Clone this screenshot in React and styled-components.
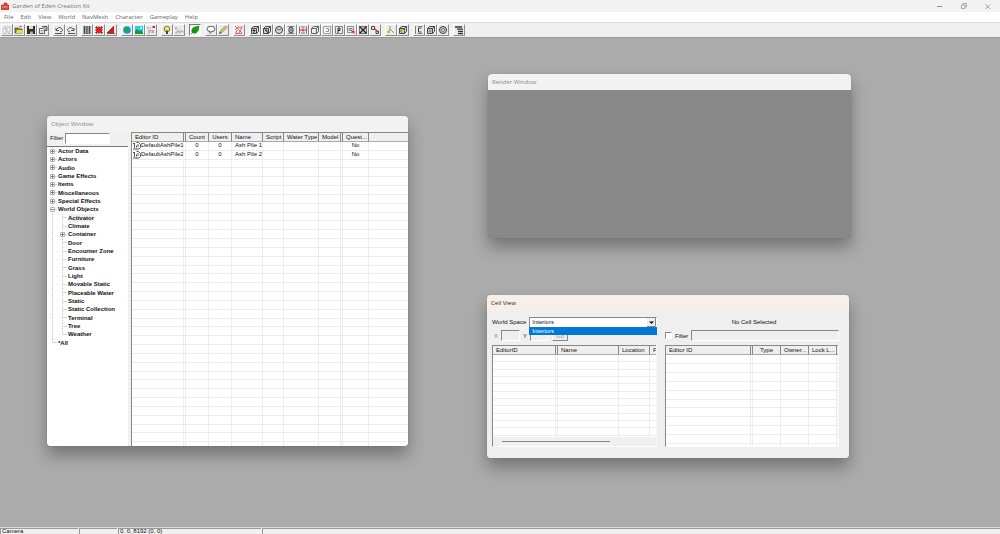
import React, { useState } from 'react';
import styled, { createGlobalStyle, css } from 'styled-components';

const GlobalStyle = createGlobalStyle`
  * {
    box-sizing: border-box;
  }
  body {
    margin: 0;
    overflow: hidden;
    background: #ababab;
  }
  button, input, select {
    font: inherit;
    color: inherit;
    margin: 0;
    padding: 0;
    border-radius: 0;
    outline: none;
  }
`;

const sunken = css`
  border: 1px solid;
  border-color: #888 #fff #fff #888;
`;

const Shell = styled.div`
  display: flex;
  flex-direction: column;
  height: 100vh;
  font-family: "Liberation Sans", Arial, sans-serif;
  font-size: 6px;
  line-height: 8px;
  color: #111;
`;

const TitleBar = styled.header`
  display: flex;
  align-items: center;
  flex: none;
  height: 12px;
  padding: 0 8px 0 1px;
  gap: 3px;
  background: #f2f2f2;
  color: #777;
  font-family: "Open Sans", "Noto Sans", sans-serif;
`;

const AppTitle = styled.h1`
  flex: 1;
  margin: 0;
  font-size: 6px;
  font-weight: 400;
`;

const CaptionButtons = styled.div`
  display: flex;
  gap: 16px;
`;

const CaptionButton = styled.button`
  display: flex;
  width: 8px;
  height: 8px;
  border: 0;
  background: none;
`;

const MenuBar = styled.nav`
  display: flex;
  align-items: center;
  flex: none;
  height: 10px;
  padding: 0 4px;
  gap: 7px;
  background: #fff;
  font-family: "Open Sans", "Noto Sans", sans-serif;
`;

const MenuLink = styled.a`
  color: #666;
  text-decoration: none;
`;

const Toolbar = styled.div`
  display: flex;
  flex: none;
  gap: 4px;
  height: 15px;
  padding: 1px 1px 0;
  border-top: 1px solid #dcdcdc;
  background: #f0f0f0;
`;

const ToolGroup = styled.div`
  display: flex;
`;

const ToolButton = styled.button`
  display: flex;
  width: 12px;
  height: 12px;
  border: 1px solid;
  border-color: ${({ $pressed }) => ($pressed ? '#777 #fff #fff #777' : '#fff #8c8c8c #8c8c8c #fff')};
  background: ${({ $pressed }) => ($pressed ? '#fafafa' : '#ececec')};
  svg {
    width: 10px;
    height: 10px;
  }
`;

const Workspace = styled.main`
  position: relative;
  flex: 1;
  overflow: hidden;
  border-top: 1px solid #999;
  background: #ababab;
`;

const StatusBar = styled.footer`
  display: flex;
  flex: none;
  gap: 1px;
  height: 7px;
  overflow: hidden;
  background: #f0f0f0;
  border-top: 1px solid #ddd;
  line-height: 5px;
`;

const StatusPane = styled.div`
  flex: ${({ $width }) => ($width ? `0 0 ${$width}px` : '1')};
  padding: 0 1px;
  border-top: 1px solid #999;
  border-left: 1px solid #999;
`;

const Window = styled.section`
  position: absolute;
  left: ${({ $x }) => $x}px;
  top: ${({ $y }) => $y}px;
  width: ${({ $w }) => $w}px;
  height: ${({ $h }) => $h}px;
  display: flex;
  flex-direction: column;
  overflow: hidden;
  border-radius: 4px;
  background: ${({ $fill }) => $fill || '#f0f0f0'};
  box-shadow: 0 0 1px 0 rgba(0, 0, 0, .3), 0 9px 16px rgba(0, 0, 0, .32);
`;

const WindowTitle = styled.h2`
  flex: none;
  height: 16px;
  margin: 0;
  padding: 0 4px;
  font-family: "Open Sans", "Noto Sans", sans-serif;
  font-size: 6px;
  font-weight: 400;
  line-height: 16px;
  color: ${({ $active }) => ($active ? '#222' : '#888')};
  background: ${({ $active }) => ($active ? '#f9efea' : '#f2f2f2')};
`;

const Split = styled.div`
  display: flex;
  flex: 1;
  min-height: 0;
`;

const SidePane = styled.div`
  display: flex;
  flex-direction: column;
  flex: 0 0 81px;
`;

const FilterRow = styled.div`
  display: flex;
  gap: 2px;
  height: 14px;
  padding: 1px 3px 2px;
  line-height: 10px;
`;

const TextBox = styled.input`
  ${sunken}
  width: ${({ $width }) => ($width ? `${$width}px` : 'auto')};
  flex: ${({ $width }) => ($width ? 'none' : '1')};
  min-width: 0;
  height: 11px;
  background: ${({ disabled }) => (disabled ? '#efefef' : '#fff')};
`;

const TreeBox = styled.div`
  flex: 1;
  overflow: hidden;
  border-top: 1px solid #777;
  background: #fff;
`;

const Tree = styled.ul`
  display: grid;
  grid-auto-rows: 1fr;
  height: 200px;
  margin: 0;
  padding: 0 1px;
  list-style: none;
  font-weight: 700;
`;

const TreeRow = styled.li`
  display: flex;
  align-items: center;
  white-space: nowrap;
`;

const Guide = styled.span`
  display: flex;
  align-items: center;
  align-self: stretch;
  width: 10px;
  padding-left: 2px;
  background:
    ${({ $branch }) => ($branch ? 'linear-gradient(#d4d4d4, #d4d4d4) 5px 50% / 4px 1px no-repeat,' : '')}
    repeating-linear-gradient(#ccc 0 1px, #f4f4f4 1px 2px) 4px 0 / 1px ${({ $last }) => ($last ? '50%' : '100%')} no-repeat;
`;

const TreeLabel = styled.span`
  background: ${({ $selected }) => ($selected ? '#f0f0f0' : 'none')};
`;

const ListBox = styled.div`
  flex: 1;
  min-width: 0;
  min-height: 0;
  overflow: hidden;
  border-left: 1px solid #888;
  background: #fff;
`;

const Splitter = styled.div`
  flex: 0 0 3px;
  background: #f0f0f0;
`;

const Table = styled.table`
  table-layout: fixed;
  width: 100%;
  height: ${({ $height }) => $height}px;
  border-spacing: 0;
  th, td {
    padding: 0 3px;
    overflow: hidden;
    white-space: nowrap;
    font-weight: 400;
    line-height: 7px;
    text-align: left;
  }
  th {
    height: 10px;
    background: #efefef;
    border-top: 1px solid #888;
    border-right: 1px solid #888;
    border-bottom: 1px solid #aaa;
  }
  td {
    height: ${({ $row }) => $row}px;
    border-right: 1px solid #ececec;
    border-bottom: 1px solid #ececec;
  }
  th.thin, td.thin {
    padding: 0;
  }
  th.center, td.center {
    text-align: center;
  }
  th:last-child, td:last-child {
    border-right: 0;
  }
`;

const FileCell = styled.span`
  display: flex;
  align-items: center;
  height: 7px;
  margin-left: -2px;
  svg {
    flex: none;
  }
`;

const CellBody = styled.div`
  display: grid;
  grid-template-columns: 165fr 174fr;
  gap: 8px;
  flex: 1;
  min-height: 0;
  padding: 6px 10px 11px 5px;
  background: #efefef;
`;

const CellPane = styled.div`
  display: flex;
  flex-direction: column;
  min-width: 0;
  min-height: 0;
`;

const FieldRow = styled.div`
  display: flex;
  align-items: center;
  flex: none;
  height: ${({ $height }) => $height}px;
  margin-bottom: ${({ $after }) => $after}px;
  padding-left: ${({ $indent }) => $indent || 0}px;
  gap: 3px;
`;

const ComboLabel = styled.label`
  flex: 0 0 34px;
  white-space: nowrap;
`;

const Combo = styled.div`
  position: relative;
  display: flex;
  flex: 1;
`;

const ComboSelect = styled.select`
  ${sunken}
  flex: 1;
  height: 11px;
  padding-left: 2px;
  appearance: none;
  background: #fff;
`;

const ComboArrow = styled.svg`
  position: absolute;
  right: 1px;
  top: 1px;
  width: 9px;
  height: 9px;
  pointer-events: none;
`;

const ComboList = styled.ul`
  position: absolute;
  z-index: 1;
  top: 10px;
  left: 0;
  right: 0;
  margin: 0;
  padding: 0 3px;
  list-style: none;
  background: #0078d7;
  color: #fff;
`;

const GoButton = styled.button`
  width: 16px;
  height: 11px;
  border: 1px solid;
  border-color: #fff #888 #888 #fff;
  background: #efefef;
  line-height: 8px;
  color: #999;
`;

const Muted = styled.label`
  width: 4px;
  color: ${({ $dim }) => ($dim ? '#888' : '#222')};
`;

const CellStatus = styled.div`
  flex: 1;
  padding-left: 4px;
  text-align: center;
`;

const CheckBox = styled.input`
  appearance: none;
  ${sunken}
  width: 7px;
  height: 7px;
  background: #fff;
  &:checked {
    background: #333;
  }
`;

const CellList = styled(ListBox)`
  border-right: 1px solid #f8f8f8;
  border-bottom: 1px solid #fff;
  display: flex;
  flex-direction: column;
`;

const Clip = styled.div`
  flex: 1;
  min-height: 0;
  overflow: hidden;
`;

const ScrollTrack = styled.div`
  display: flex;
  align-items: center;
  flex: none;
  height: 9px;
  padding: 0 9px;
  background: #f0f0f0;
`;

const ScrollThumb = styled.div`
  width: 108px;
  height: 1px;
  background: #888;
`;

const K = '#3a3a3a';
const cube = <path d="M1.500 3.500h5v5h-5zM1.500 3.500l2-2h5l-2 2M8.500 1.500v5l-2 2" fill="#d4d4d4" stroke={K} strokeWidth=".9" />;

const ICONS = {
  new: <path d="M1 3.500h3v5H1zM5 2h3v5H5zM2 2h2M6 8.500h3" fill="#f8f8f8" stroke="#b4b4b4" strokeWidth=".8" />,
  open: <><path d="M1 8V3h3l1 1h3v4z" fill="#8a8a1c" stroke={K} strokeWidth=".7" /><path d="M2 8l1-3h6L8 8z" fill="#e8e04a" /><path d="M5 2q2-1.500 3 0" fill="none" stroke={K} strokeWidth=".7" /></>,
  save: <><path d="M1 1h8v8H1z" fill="#33331c" /><path d="M3 1h4v3H3z" fill="#ddd" /><path d="M4 6.500h3V9H4z" fill="#aaa" /></>,
  prefs: <><path d="M1.500 3.500h5v5h-5z" fill="#fff" stroke="#555" strokeWidth=".9" /><path d="M4 1.500h5v4H6" fill="#aaa" stroke="#444" strokeWidth=".8" /><path d="M2.500 5.500h3M2.500 7h3" stroke="#777" strokeWidth=".7" /></>,
  undo: <path d="M1 8.500h7M2 5.500h3M2 3v2.500M2 5Q5 1 7.500 3.500T6 7" fill="none" stroke="#444" strokeWidth=".9" />,
  redo: <path d="M2 8.500h7M8 5.500H5M8 3v2.500M8 5Q5 1 2.500 3.500T4 7" fill="none" stroke="#444" strokeWidth=".9" />,
  grid: <path d="M1 2h8M1 4h8M1 6h8M1 8h8M2.500 1v8M5 1v8M7.500 1v8" stroke="#222" strokeWidth=".7" />,
  snap: <><path d="M1 2.500h8M1 7.500h8M2.500 1v8M7.500 1v8" stroke={K} strokeWidth=".7" /><circle cx="5" cy="5" r="2.800" fill="#f01818" /><path d="M5 1v8M1 5h8" stroke="#f01818" /></>,
  angle: <><path d="M8 1v7H1z" fill="#e01818" /><path d="M1 8.500h8M1 8L8 1" stroke={K} strokeWidth=".8" /></>,
  world: <><circle cx="5" cy="5" r="3.800" fill="#189ad8" /><path d="M2 3l3-1 1 2-2 3-2-1zM6 5h2L7 8z" fill="#18a838" /></>,
  land: <><path d="M1 1h8v8H1z" fill="#28d0e8" /><path d="M1 9V6l2-2 2 2 2-1 2 3v1z" fill="#139a38" /><circle cx="7" cy="3" r="1" fill="#fff" /></>,
  path: <><path d="M1 3h2M4 3h1M2 6h2M5 7h3M2 8h2M7 5v3" stroke="#888" strokeWidth=".9" /><path d="M6.500 1h2.500v2H6.500z" fill="#e02020" /><path d="M4 5h1v1H4z" fill="#e02020" /></>,
  bulb: <><circle cx="5" cy="4" r="2.800" fill="#f4ee50" stroke="#555" strokeWidth=".8" /><path d="M4 5.500h2V9H4z" fill="#444" /></>,
  sky: <path d="M1 3h2M2 2v3M4.500 4h1M1 8h2V6h2v2h1V6h3v2" fill="none" stroke="#999" strokeWidth=".8" />,
  leaf: <><path d="M2 7Q1 3 5 2l4-1q0 5-3 7-2 1-4-1z" fill="#12a51a" stroke="#0b7d10" strokeWidth=".6" /><path d="M1 9l5-5" stroke="#0b5d10" strokeWidth=".7" /></>,
  speech: <><ellipse cx="5" cy="4" rx="4" ry="2.700" fill="#fff" stroke={K} strokeWidth=".8" /><path d="M4 6.500v2l2-2" fill="#fff" stroke={K} strokeWidth=".7" /></>,
  pencil: <><path d="M1.500 8.500l1-2.500 5-5 1.500 1.500-5 5z" fill="#e6d24a" stroke="#555" strokeWidth=".6" /><path d="M1 9l1-2 1 1z" fill={K} /></>,
  navmesh: <path d="M1 1l2 2 2-1 2 1 1-2M1 5l2-2 3 3 2-3M2 8l1-3M5 8l1-2 2 2M1 8.500h7" fill="none" stroke="#d44" strokeWidth=".8" />,
  marker: <>{cube}<path d="M4 4.500v3.500M2.500 5.500h3" stroke="#222" /></>,
  trigger: <>{cube}<path d="M2.500 4.500L6 8M3 5h2v2" fill="none" stroke={K} strokeWidth=".9" /></>,
  sphere: <><circle cx="5" cy="5" r="3.500" fill="#ddd" stroke={K} /><path d="M3 4l2 1 2-1" fill="none" stroke={K} strokeWidth=".8" /></>,
  cylinder: <><path d="M1.500 1.500h7M1.500 8.500h7" stroke="#777" strokeWidth=".8" /><rect x="3" y="2" width="4" height="6" rx="2" fill="#ccc" stroke={K} /><path d="M5 3.500v3" stroke={K} strokeWidth=".8" /></>,
  plane: <><path d="M1.500 1.500v7M8.500 1.500v7M3 2h4M3 8h4" stroke="#666" strokeWidth=".9" /><path d="M2 5h6M5 3.500v3" stroke="#e22" strokeWidth="1.200" /></>,
  box: <path d="M1.500 3.500h5v5h-5zM1.500 3.500l2-2h5l-2 2M8.500 1.500v5l-2 2" fill="#ececec" stroke="#555" strokeWidth=".9" />,
  room: <><path d="M1.500 1.500h7v7h-7z" fill="#f5f5f5" stroke="#999" strokeWidth=".9" /><path d="M4 3.500h2.500v3H4" fill="none" stroke="#777" strokeWidth=".8" /></>,
  portal: <><path d="M1.500 1.500h7v7h-7z" fill="#eee" stroke="#666" strokeWidth=".8" /><path d="M4 8V3h2v2.500H4" fill="none" stroke="#222" /></>,
  link: <><path d="M1.500 1.500h6v6h-6z" fill="#eee" stroke="#888" strokeWidth=".9" /><path d="M3 3.500h3v2H3z" fill="none" stroke="#666" strokeWidth=".8" /><path d="M5 6h3.500v3z" fill="#e22" /></>,
  delete: <><path d="M1.500 1.500h7v7h-7z" fill="#ccc" stroke="#666" strokeWidth=".9" /><path d="M1.500 1.500l7 7M8.500 1.500l-7 7" stroke="#222" strokeWidth="1.200" /></>,
  chain: <><path d="M1.500 1.500h3v3h-3zM6 6h2.500v2.500H6z" fill="#ddd" stroke={K} strokeWidth=".9" /><path d="M4.500 3.500l3 3" stroke="#e22" strokeWidth="1.300" /></>,
  light: <><path d="M4 1v3l4 4M4 4L3 8" fill="none" stroke="#777" strokeWidth=".8" /><circle cx="2.500" cy="7" r="1.400" fill="#c8c020" /></>,
  sound: <>{cube}<path d="M2 6l2-2v4zM5 4l2 2" fill="#d8d020" stroke="#8a860c" strokeWidth=".7" /></>,
  collision: <><path d="M1.500 1v8M3.500 1.500h5M3.500 8.500h5" stroke="#777" strokeWidth=".9" /><path d="M7.500 3H4.500v4h3" fill="none" stroke={K} /></>,
  solid: <>{cube}<path d="M2.500 4.500h3v3h-3z" fill="#999" /></>,
  ring: <><circle cx="5" cy="5" r="3.500" fill="#ccc" stroke={K} /><circle cx="5" cy="5" r="1.500" fill="#eee" stroke="#555" strokeWidth=".8" /></>,
  tree: <path d="M1 2h7M3 4.200h6M4 6.300h5M4 8.500h5" stroke="#333" strokeWidth="1.300" />,
};

const TOOL_GROUPS = [
  ['new', 'open', 'save', 'prefs'],
  ['undo', 'redo'],
  ['grid', 'snap', 'angle'],
  ['world', 'land', 'path'],
  ['bulb', 'sky'],
  ['leaf'],
  ['speech', 'pencil'],
  ['navmesh'],
  ['marker', 'trigger', 'sphere', 'cylinder', 'plane', 'box', 'room', 'portal', 'link', 'delete', 'chain'],
  ['light', 'sound'],
  ['collision', 'solid', 'ring'],
  ['tree'],
];

const MENUS = ['File', 'Edit', 'View', 'World', 'NavMesh', 'Character', 'Gameplay', 'Help'];

const TREE = [
  { label: 'Actor Data', box: '+' },
  { label: 'Actors', box: '+' },
  { label: 'Audio', box: '+' },
  { label: 'Game Effects', box: '+' },
  { label: 'Items', box: '+' },
  { label: 'Miscellaneous', box: '+' },
  { label: 'Special Effects', box: '+' },
  { label: 'World Objects', box: '-' },
  { label: 'Activator', child: true, selected: true },
  { label: 'Climate', child: true },
  { label: 'Container', child: true, box: '+' },
  { label: 'Door', child: true },
  { label: 'Encounter Zone', child: true },
  { label: 'Furniture', child: true },
  { label: 'Grass', child: true },
  { label: 'Light', child: true },
  { label: 'Movable Static', child: true },
  { label: 'Placeable Water', child: true },
  { label: 'Static', child: true },
  { label: 'Static Collection', child: true },
  { label: 'Terminal', child: true },
  { label: 'Tree', child: true },
  { label: 'Weather', child: true, last: true },
  { label: '*All', last: true },
];

const OBJECT_COLUMNS = [
  { label: 'Editor ID', width: 52 },
  { width: 2, thin: true },
  { label: 'Count', width: 23, center: true },
  { label: 'Users', width: 23, center: true },
  { label: 'Name', width: 31 },
  { label: 'Script', width: 21 },
  { label: 'Water Type', width: 35 },
  { label: 'Model', width: 22 },
  { width: 2, thin: true },
  { label: 'Quest...', width: 26, center: true },
  {},
];

const OBJECT_ROWS = [
  ['DefaultAshPile1', '', '0', '0', 'Ash Pile 1', '', '', '', '', 'No', ''],
  ['DefaultAshPile2', '', '0', '0', 'Ash Pile 2', '', '', '', '', 'No', ''],
];

const CELL_COLUMNS = [
  { label: 'EditorID', width: 63 },
  { width: 2, thin: true },
  { label: 'Name', width: 61 },
  { label: 'Location', width: 31 },
  { label: 'F' },
];

const REF_COLUMNS = [
  { label: 'Editor ID', width: 85 },
  { width: 2, thin: true },
  { label: 'Type', width: 28, center: true },
  { label: 'Owner...', width: 28 },
  { label: 'Lock L...', width: 28 },
  { thin: true },
];

const Expander = ({ sign }) => (
  <svg width="5" height="5" viewBox="0 0 5 5" aria-hidden="true">
    <path d="M.5 .5h4v4h-4z" fill="#fff" stroke="#aaa" strokeWidth=".9" />
    <path d={sign === '+' ? 'M1 2.5h3M2.5 1v3' : 'M1 2.5h3'} stroke="#555" strokeWidth=".7" />
  </svg>
);

const FileIcon = () => (
  <svg width="8" height="8" viewBox="0 0 8 8" aria-hidden="true">
    <path d="M3.500 .5h2l2 2v3l-1.500 1.500h-2.500" fill="#fff" stroke="#444" strokeWidth=".9" />
    <path d="M0 7h4M0 1.500h2M1.500 1v5M5 2v3M3.500 3.500v2" stroke="#444" strokeWidth=".9" />
  </svg>
);

const ListView = ({
  columns, rows = [], count, height, rowHeight, icons,
}) => {
  const name = (c) => (c.thin ? 'thin' : c.center ? 'center' : undefined);
  return (
    <Table $height={height} $row={rowHeight}>
      <colgroup>
        {columns.map((c, i) => <col key={i} width={c.width} />)}
      </colgroup>
      <thead>
        <tr>
          {columns.map((c, i) => <th key={i} className={name(c)}>{c.label}</th>)}
        </tr>
      </thead>
      <tbody>
        {Array.from({ length: count }, (_, r) => (
          <tr key={r}>
            {columns.map((c, i) => {
              const value = rows[r] && rows[r][i];
              return (
                <td key={i} className={name(c)}>
                  {icons && i === 0 && value ? <FileCell><FileIcon />{value}</FileCell> : value}
                </td>
              );
            })}
          </tr>
        ))}
      </tbody>
    </Table>
  );
};

const ObjectWindow = () => {
  const [filter, setFilter] = useState('');
  return (
    <Window $x={47} $y={78} $w={361} $h={330}>
      <WindowTitle>Object Window</WindowTitle>
      <Split>
        <SidePane>
          <FilterRow>
            <label htmlFor="object-filter">Filter</label>
            <TextBox id="object-filter" $width={45} value={filter} onChange={(e) => setFilter(e.target.value)} />
          </FilterRow>
          <TreeBox>
            <Tree>
              {TREE.map((node) => (
                <TreeRow key={node.label}>
                  {node.child && <Guide />}
                  <Guide $branch $last={node.last}>
                    {node.box && <Expander sign={node.box} />}
                  </Guide>
                  <TreeLabel $selected={node.selected}>{node.label}</TreeLabel>
                </TreeRow>
              ))}
            </Tree>
          </TreeBox>
        </SidePane>
        <Splitter />
        <ListBox>
          <ListView columns={OBJECT_COLUMNS} rows={OBJECT_ROWS} count={35} height={319} rowHeight={8} icons />
        </ListBox>
      </Split>
    </Window>
  );
};

const CellWindow = () => {
  const [filterOn, setFilterOn] = useState(false);
  return (
    <Window $x={487} $y={257} $w={362} $h={163}>
      <WindowTitle $active>Cell View</WindowTitle>
      <CellBody>
        <CellPane>
          <FieldRow $height={10} $after={3}>
            <ComboLabel htmlFor="world-space">World Space</ComboLabel>
            <Combo>
              <ComboSelect id="world-space" defaultValue="Interiors">
                <option>Interiors</option>
              </ComboSelect>
              <ComboArrow viewBox="0 0 9 9" aria-hidden="true">
                <path d="M0 0h9v9H0z" fill="#efefef" />
                <path d="M8.500 0v8.500H0" fill="none" stroke="#888" />
                <path d="M2 3.500h5L4.500 6z" fill="#111" />
              </ComboArrow>
              <ComboList>
                <li>Interiors</li>
              </ComboList>
            </Combo>
          </FieldRow>
          <FieldRow $height={11} $after={4} $indent={2}>
            <Muted htmlFor="cell-x" $dim>X</Muted>
            <TextBox id="cell-x" $width={19} disabled />
            <Muted htmlFor="cell-y">Y</Muted>
            <TextBox id="cell-y" $width={19} disabled />
            <GoButton disabled>Go</GoButton>
          </FieldRow>
          <CellList>
            <Clip>
              <ListView columns={CELL_COLUMNS} count={12} height={98} rowHeight={7} />
            </Clip>
            <ScrollTrack>
              <ScrollThumb />
            </ScrollTrack>
          </CellList>
        </CellPane>
        <CellPane>
          <FieldRow $height={10} $after={3}>
            <CellStatus>No Cell Selected</CellStatus>
          </FieldRow>
          <FieldRow $height={11} $after={4}>
            <CheckBox id="ref-filter" type="checkbox" checked={filterOn} onChange={(e) => setFilterOn(e.target.checked)} />
            <label htmlFor="ref-filter">Filter</label>
            <TextBox aria-label="Filter text" disabled={!filterOn} />
          </FieldRow>
          <CellList>
            <Clip>
              <ListView columns={REF_COLUMNS} count={11} height={108} rowHeight={8} />
            </Clip>
          </CellList>
        </CellPane>
      </CellBody>
    </Window>
  );
};

const App = () => (
  <>
    <GlobalStyle />
    <Shell>
      <TitleBar>
        <svg width="8" height="8" viewBox="0 0 8 8" aria-hidden="true">
          <path d="M0 3h8v5H0zM3 3V1h3v2" fill="#d8483c" stroke="#b83a30" strokeWidth=".6" />
          <path d="M1 5h6M4 4v2" stroke="#f0a8a0" strokeWidth=".7" />
        </svg>
        <AppTitle>Garden of Eden Creation Kit</AppTitle>
        <CaptionButtons>
          <CaptionButton aria-label="Minimize">
            <svg viewBox="0 0 8 8"><path d="M1 4.500h5" stroke="#777" strokeWidth=".8" /></svg>
          </CaptionButton>
          <CaptionButton aria-label="Restore">
            <svg viewBox="0 0 8 8"><path d="M1.500 3h3.500v3.500H1.500zM3 3V1.500h3.500V5H5" fill="none" stroke="#999" strokeWidth=".8" /></svg>
          </CaptionButton>
          <CaptionButton aria-label="Close">
            <svg viewBox="0 0 8 8"><path d="M1.500 2.500l4.500 4.500M6 2.500L1.500 7" stroke="#888" strokeWidth=".8" /></svg>
          </CaptionButton>
        </CaptionButtons>
      </TitleBar>
      <MenuBar>
        {MENUS.map((m) => <MenuLink key={m} href="#">{m}</MenuLink>)}
      </MenuBar>
      <Toolbar>
        {TOOL_GROUPS.map((group) => (
          <ToolGroup key={group[0]}>
            {group.map((tool) => (
              <ToolButton key={tool} aria-label={tool} $pressed={tool === 'leaf'}>
                <svg viewBox="0 0 10 10">{ICONS[tool]}</svg>
              </ToolButton>
            ))}
          </ToolGroup>
        ))}
      </Toolbar>
      <Workspace>
        <ObjectWindow />
        <Window $x={488} $y={36} $w={363} $h={164} $fill="#888">
          <WindowTitle>Render Window</WindowTitle>
        </Window>
        <CellWindow />
      </Workspace>
      <StatusBar>
        <StatusPane $width={78}>Camera</StatusPane>
        <StatusPane $width={38} />
        <StatusPane $width={143}>0, 0, 8192 (0, 0)</StatusPane>
        <StatusPane />
      </StatusBar>
    </Shell>
  </>
);

export default App;
